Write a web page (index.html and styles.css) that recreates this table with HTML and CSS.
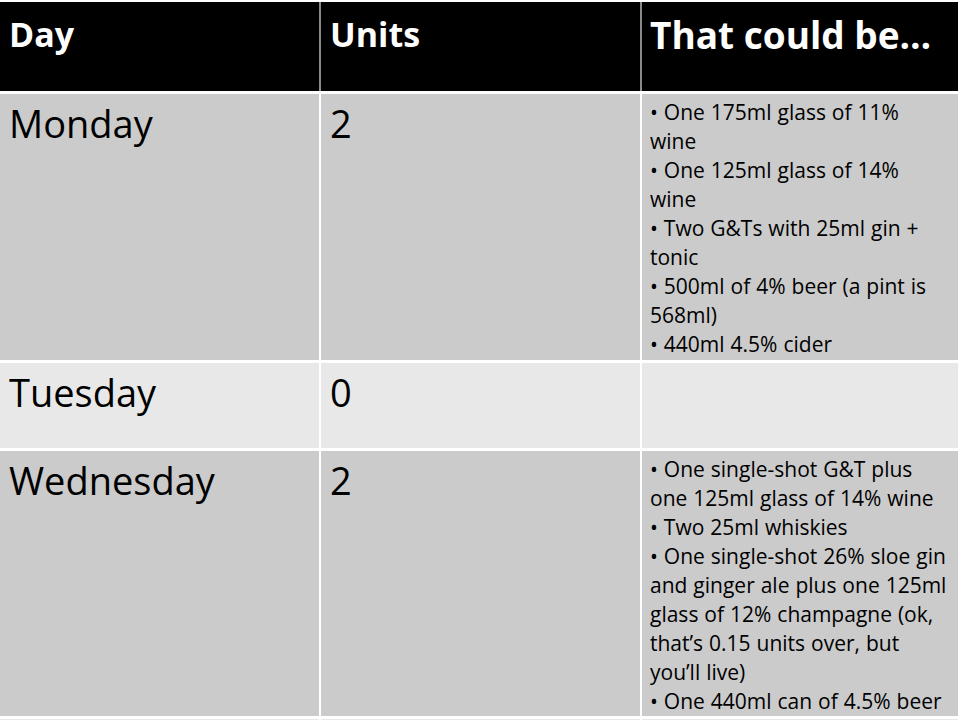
FILE: index.html
```html
<!DOCTYPE html>
<html lang="en">
<head>
<meta charset="utf-8">
<title>Units</title>
<link rel="stylesheet" href="styles.css">
</head>
<body>
<div class="table">
  <div class="row head">
    <div class="cell">Day</div>
    <div class="cell">Units</div>
    <div class="cell big">That could be…</div>
  </div>
  <div class="row band1 monday">
    <div class="cell day">Monday</div>
    <div class="cell day">2</div>
    <div class="cell list">• One 175ml glass of 11%<br>wine<br>• One 125ml glass of 14%<br>wine<br>• Two G&amp;Ts with 25ml gin +<br>tonic<br>• 500ml of 4% beer (a pint is<br>568ml)<br>• 440ml 4.5% cider</div>
  </div>
  <div class="row band2 tuesday">
    <div class="cell day">Tuesday</div>
    <div class="cell day">0</div>
    <div class="cell list"></div>
  </div>
  <div class="row band1 wednesday">
    <div class="cell day">Wednesday</div>
    <div class="cell day">2</div>
    <div class="cell list">• One single-shot G&amp;T plus<br>one 125ml glass of 14% wine<br>• Two 25ml whiskies<br>• One single-shot 26% sloe gin<br>and ginger ale plus one 125ml<br>glass of 12% champagne (ok,<br>that’s 0.15 units over, but<br>you’ll live)<br>• One 440ml can of 4.5% beer</div>
  </div>
  <div class="row band2 rest">
    <div class="cell"></div>
    <div class="cell"></div>
    <div class="cell"></div>
  </div>
</div>
</body>
</html>
```
FILE: styles.css
```css
html, body {
  margin: 0;
  padding: 0;
  background: #ffffff;
  height: 720px;
  overflow: hidden;
}

.table {
  width: 958px;
  padding-top: 2px;
  display: flex;
  flex-direction: column;
  gap: 3px;
  font-family: "Open Sans", "Liberation Sans", sans-serif;
  color: #000;
}

.row {
  display: grid;
  grid-template-columns: 319px 319px 316px;
  column-gap: 2px;
  background: #ffffff;
}

.cell {
  white-space: nowrap;
}

.head {
  height: 89px;
  background: #8a8a8a;
}

.head .cell {
  background: #000;
  color: #fff;
  font-weight: 700;
  font-size: 34px;
  line-height: 40px;
  padding: 12px 0 0 9px;
}

.head .cell.big {
  font-size: 37px;
  padding-left: 8px;
  padding-top: 13px;
}

.band1 .cell { background: #cbcbcb; }
.band2 .cell { background: #e8e8e8; }

.monday { height: 266px; }
.tuesday { height: 85px; }
.wednesday { height: 265px; }
.rest { height: 10px; }

.day {
  font-size: 38px;
  line-height: 44px;
  padding: 7px 0 0 9px;
}

.list {
  font-size: 21px;
  line-height: 29px;
  padding: 4px 0 0 8px;
  word-spacing: 0.5px;
}
```
